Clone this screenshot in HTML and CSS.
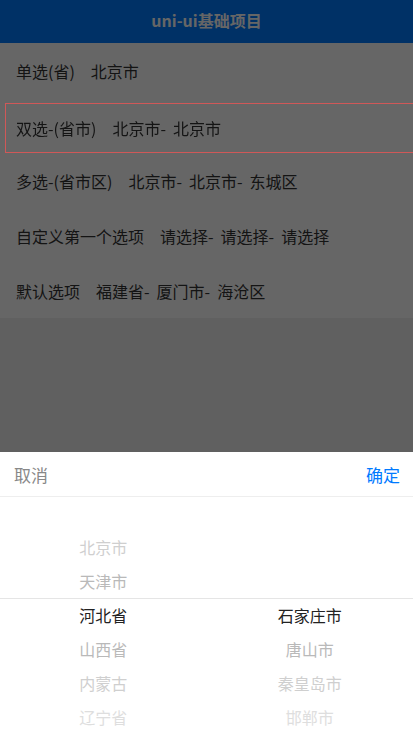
FILE: index.html
```html
<!DOCTYPE html>
<html lang="zh">
<head>
<meta charset="utf-8">
<link rel="stylesheet" href="styles.css">
</head>
<body>
<div class="app">
  <header class="nav">uni-ui基础项目</header>
  <main class="list">
    <div class="row"><span class="label">单选(省)</span><span class="val">北京市</span></div>
    <div class="row active"><span class="label">双选-(省市)</span><span class="val">北京市-</span><span class="val">北京市</span></div>
    <div class="row"><span class="label">多选-(省市区)</span><span class="val">北京市-</span><span class="val">北京市-</span><span class="val">东城区</span></div>
    <div class="row"><span class="label">自定义第一个选项</span><span class="val">请选择-</span><span class="val">请选择-</span><span class="val">请选择</span></div>
    <div class="row"><span class="label">默认选项</span><span class="val">福建省-</span><span class="val">厦门市-</span><span class="val">海沧区</span></div>
  </main>
</div>
<div class="mask"></div>
<section class="picker">
  <div class="picker-head">
    <span class="cancel">取消</span>
    <span class="ok">确定</span>
  </div>
  <div class="picker-body">
    <div class="indicator"></div>
    <div class="col">
      <div class="item"></div>
      <div class="item f2">北京市</div>
      <div class="item f1">天津市</div>
      <div class="item sel">河北省</div>
      <div class="item f1">山西省</div>
      <div class="item f2">内蒙古</div>
      <div class="item f3">辽宁省</div>
    </div>
    <div class="col">
      <div class="item"></div>
      <div class="item"></div>
      <div class="item"></div>
      <div class="item sel">石家庄市</div>
      <div class="item f1">唐山市</div>
      <div class="item f2">秦皇岛市</div>
      <div class="item f3">邯郸市</div>
    </div>
  </div>
</section>
</body>
</html>
```
FILE: styles.css
```css
html, body {
  margin: 0;
  padding: 0;
  height: 100%;
  overflow: hidden;
}
body {
  background: #f0f0f0;
  font-family: "Noto Sans CJK SC", "Noto Sans", sans-serif;
}
.app {
  display: flex;
  flex-direction: column;
}
.nav {
  height: 43px;
  box-sizing: border-box;
  padding-bottom: 3px;
  background: #007aff;
  color: #fff;
  font-weight: bold;
  font-size: 16px;
  display: flex;
  align-items: center;
  justify-content: center;
}
.list {
  background: #fff;
  display: flex;
  flex-direction: column;
}
.row {
  height: 55px;
  display: flex;
  align-items: center;
  gap: 7px;
  padding-left: 16px;
  font-size: 16px;
  color: #333;
  box-sizing: border-box;
}
.row .label {
  margin-right: 9px;
}
.row.active {
  position: relative;
  z-index: 2;
  margin: 5px -20px 0 5px;
  height: 50px;
  padding-left: 10px;
  border: 1px solid #d05858;
}
.row.active .label,
.row.active .val {
  color: #141414;
}
.mask {
  position: fixed;
  inset: 0;
  z-index: 1;
  background: rgba(0, 0, 0, 0.6);
}
.picker {
  position: fixed;
  z-index: 3;
  left: 0;
  right: 0;
  top: 452px;
  bottom: 0;
  background: #fff;
  display: flex;
  flex-direction: column;
}
.picker-head {
  height: 44px;
  display: flex;
  align-items: center;
  justify-content: space-between;
  padding: 0 13px 0 14px;
  font-size: 17px;
  border-bottom: 1px solid #eee;
  flex-shrink: 0;
}
.cancel { color: #888; }
.ok { color: #007aff; }
.picker-body {
  position: relative;
  display: grid;
  grid-template-columns: 1fr 1fr;
}
.indicator {
  position: absolute;
  left: 0;
  right: 0;
  top: 101px;
  height: 34px;
  border-top: 1px solid #e5e5e5;
  pointer-events: none;
}
.col {
  display: flex;
  flex-direction: column;
}
.item {
  height: 34px;
  line-height: 33px;
  text-align: center;
  font-size: 16px;
  color: #bbb;
}
.item.sel { color: #222; }
.item.f1 { color: #b9b9b9; }
.item.f2 { color: #cfcfcf; }
.item.f3 { color: #dedede; }
```
